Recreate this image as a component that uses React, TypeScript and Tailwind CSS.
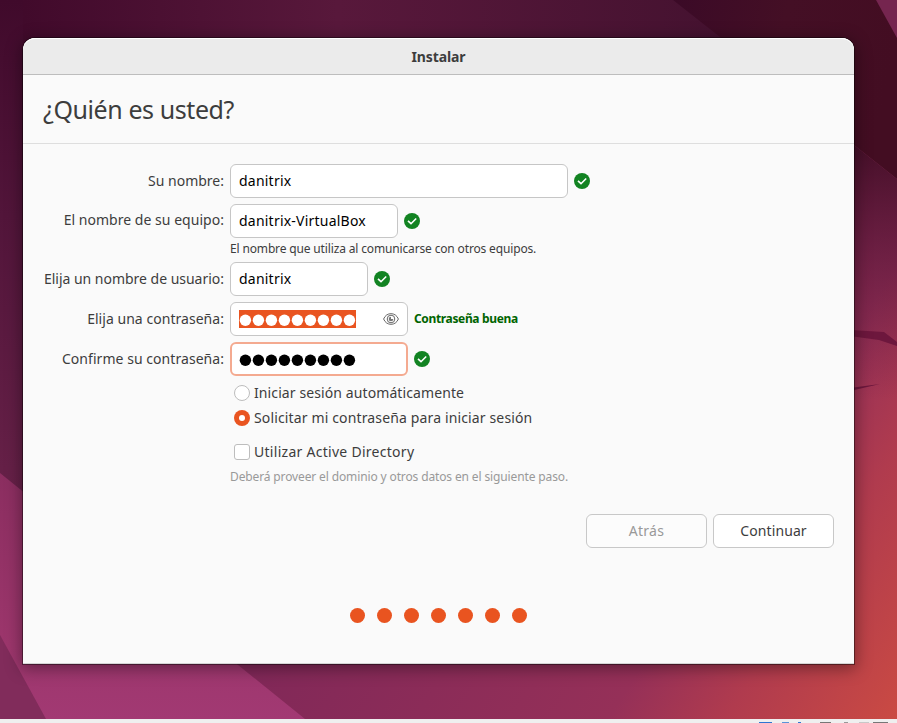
import type { ReactNode } from 'react';

function Wallpaper() {
  return (
    <svg className="absolute inset-0 h-[719px] w-[897px]" viewBox="0 0 897 719" aria-hidden="true">
      <defs>
        <linearGradient id="left" x1="0" y1="0" x2="0" y2="1">
          <stop offset="0" stopColor="#400a2b" />
          <stop offset="0.3" stopColor="#52153a" />
          <stop offset="0.65" stopColor="#652047" />
          <stop offset="1" stopColor="#702350" />
        </linearGradient>
        <linearGradient id="top" x1="0" y1="0" x2="1" y2="0">
          <stop offset="0" stopColor="#410a2b" />
          <stop offset="0.36" stopColor="#58183b" />
          <stop offset="0.8" stopColor="#451230" />
          <stop offset="1" stopColor="#43122f" />
        </linearGradient>
        <linearGradient id="shade" x1="0" y1="0" x2="1" y2="0.2">
          <stop offset="0" stopColor="#3b0a27" />
          <stop offset="0.5" stopColor="#440f25" />
          <stop offset="1" stopColor="#430d22" />
        </linearGradient>
        <linearGradient id="warm" x1="0" y1="0" x2="972" y2="615" gradientUnits="userSpaceOnUse">
          <stop offset="0.497" stopColor="#812858" />
          <stop offset="0.781" stopColor="#953058" />
          <stop offset="0.867" stopColor="#b03b4e" />
          <stop offset="0.993" stopColor="#ca4a43" />
        </linearGradient>
        <linearGradient id="dusk" x1="0" y1="145" x2="0" y2="400" gradientUnits="userSpaceOnUse">
          <stop offset="0" stopColor="#380a20" stopOpacity="0.85" />
          <stop offset="0.45" stopColor="#4a1030" stopOpacity="0.5" />
          <stop offset="1" stopColor="#5a1538" stopOpacity="0" />
        </linearGradient>
        <linearGradient id="magenta" x1="0" y1="473" x2="0" y2="719" gradientUnits="userSpaceOnUse">
          <stop offset="0" stopColor="#8b2e60" />
          <stop offset="0.7" stopColor="#9c366c" />
          <stop offset="1" stopColor="#a23973" />
        </linearGradient>
      </defs>
      <path fill="url(#left)" d="M0 0h450v719H0z" />
      <path fill="url(#top)" d="M23 0h874v80H23z" />
      <path fill="url(#shade)" d="M673 0h224v200H854L720 37z" />
      <path fill="#75254f" d="M876 0h21v38z" />
      <path fill="url(#warm)" d="M840 134l57 45v540H200v-89h640z" />
      <path fill="url(#dusk)" d="M840 134l57 45v221h-57z" />
      <path fill="#6d173d" d="M850 330l34 2 13 10v4l-18-6-29-4zM850 388l30-4-30 7z" />
      <path fill="url(#magenta)" d="M0 473l305 246H0z" />
      <path fill="#812c5b" d="M0 635l46 84H0z" />
    </svg>
  );
}

function Check() {
  return (
    <svg className="ml-1.5 size-4 shrink-0" viewBox="0 0 16 16" aria-hidden="true">
      <circle cx="8" cy="8" r="8" fill="#128322" />
      <path d="M4 7.8l3 2.9 5.2-5.2" fill="none" stroke="#fff" strokeWidth="1.6" />
    </svg>
  );
}

function Eye() {
  return (
    <svg className="h-4 w-4" viewBox="0 0 16 16" fill="none" stroke="#666" strokeWidth="1" aria-hidden="true">
      <path d="M.6 8C2.2 4.3 4.8 2.7 8 2.7S13.8 4.3 15.4 8C13.8 11.7 11.2 13.3 8 13.3S2.2 11.7.6 8z" />
      <circle cx="8" cy="8" r="3.8" />
      <path d="M8 5.7A2.3 2.3 0 1 0 10.3 8H8z" fill="#777" stroke="none" />
    </svg>
  );
}

function Row({ label, tracking, children }: { label: string; tracking: string; children: ReactNode }) {
  return (
    <div className="flex h-[34px] items-center">
      <label className={`w-[201px] shrink-0 whitespace-nowrap text-right ${tracking}`}>{label}</label>
      <div className="ml-[6px] flex items-center">{children}</div>
    </div>
  );
}

function Field({ width, children }: { width: string; children: ReactNode }) {
  return (
    <div className={`flex h-[34px] items-center rounded-md border border-[#c6c6c6] bg-white px-2 tracking-[0.22px] text-black ${width}`}>
      {children}
    </div>
  );
}

function Bullets({ color }: { color: string }) {
  return (
    <svg className={`block h-[18px] w-[117px] ${color}`} viewBox="0 0 117 18" fill="currentColor" aria-hidden="true">
      {Array.from({ length: 9 }, (_, i) => (
        <circle key={i} cx={6.4 + i * 13} cy="10.2" r="5.7" />
      ))}
    </svg>
  );
}

export default function App() {
  return (
    <div className="relative flex h-[723px] w-[897px] flex-col overflow-hidden font-['Noto_Sans',sans-serif] text-[14px] leading-5 text-[#3d3d3d]">
      <Wallpaper />
      <main className="relative ml-[23px] mt-[38px] flex h-[626px] w-[831px] flex-col rounded-t-xl border-b border-[#d5d5d5] bg-[#fafafa] shadow-[0_0_0_1px_rgba(0,0,0,0.4),0_3px_16px_2px_rgba(0,0,0,0.36)]">
        <header className="flex h-[37px] items-center justify-center rounded-t-xl border-b border-[#bdbdbd] bg-[#ebebeb] pt-0.5 text-[14px] font-bold tracking-[-0.1px] shadow-[inset_0_1px_#fff]">
          Instalar
        </header>
        <h1 className="flex h-[69px] items-center border-b border-[#dedede] pl-5 text-[25px] tracking-[-0.42px]">¿Quién es usted?</h1>
        <form className="flex flex-col pt-5">
          <Row label="Su nombre:" tracking="tracking-[0px]">
            <Field width="w-[338px]">danitrix</Field>
            <Check />
          </Row>
          <div className="mt-1.5">
            <Row label="El nombre de su equipo:" tracking="tracking-[0.03px] pb-0.5">
              <Field width="w-[168px]">danitrix-VirtualBox</Field>
              <Check />
            </Row>
          </div>
          <p className="ml-[207px] h-6 whitespace-nowrap pt-px text-[12px] tracking-[-0.15px]">El nombre que utiliza al comunicarse con otros equipos.</p>
          <Row label="Elija un nombre de usuario:" tracking="tracking-[-0.02px]">
            <Field width="w-[138px]">danitrix</Field>
            <Check />
          </Row>
          <div className="mt-1.5">
            <Row label="Elija una contraseña:" tracking="tracking-[0.04px]">
              <Field width="w-[178px]">
                <span className="bg-[#e95420]"><Bullets color="text-white" /></span>
                <span className="ml-auto"><Eye /></span>
              </Field>
              <strong className="ml-1.5 text-[12px] tracking-[-0.35px] text-[#006400]">Contraseña buena</strong>
            </Row>
          </div>
          <div className="mt-1.5">
            <Row label="Confirme su contraseña:" tracking="tracking-[0.05px]">
              <div className="flex h-[34px] w-[178px] items-center rounded-md border-2 border-[#f4aa90] bg-white px-[7px]">
                <Bullets color="text-black" />
              </div>
              <Check />
            </Row>
          </div>
          <div className="ml-[211px] mt-[7px] flex flex-col">
            <label className="flex h-5 items-center gap-1">
              <span className="size-4 rounded-full border border-[#bdbdbd] bg-white" />
              <span className="tracking-[0.1px]">Iniciar sesión automáticamente</span>
            </label>
            <label className="mt-[5px] flex h-5 items-center gap-1">
              <span className="flex size-4 items-center justify-center rounded-full bg-[#e95420]">
                <span className="size-1.5 rounded-full bg-white" />
              </span>
              <span className="tracking-[0.14px]">Solicitar mi contraseña para iniciar sesión</span>
            </label>
            <label className="mt-3.5 flex h-5 items-center gap-1">
              <span className="size-4 rounded-[3px] border border-[#bdbdbd] bg-white" />
              <span className="tracking-[0.28px]">Utilizar Active Directory</span>
            </label>
          </div>
          <p className="ml-[207px] mt-[5px] h-5 whitespace-nowrap text-[12px] tracking-[-0.13px] text-[#999]">Deberá proveer el dominio y otros datos en el siguiente paso.</p>
          <div className="mr-5 mt-[27px] flex justify-end gap-1.5">
            <button type="button" disabled className="h-[34px] w-[121px] rounded-md border border-[#c8c8c8] bg-[#fcfcfc] tracking-[0.3px] text-[#999]">Atrás</button>
            <button type="button" className="h-[34px] w-[121px] rounded-md border border-[#c8c8c8] bg-white tracking-[0.1px]">Continuar</button>
          </div>
        </form>
        <div className="mt-[60px] flex justify-center gap-3">
          {Array.from({ length: 7 }, (_, i) => (
            <span key={i} className="size-[15px] rounded-full bg-[#e95420]" />
          ))}
        </div>
      </main>
      <footer className="relative mt-auto flex h-1 items-end bg-[#efefef] pl-[759px]">
        <i className="h-px w-[13px] bg-[#2e75d2]" />
        <i className="ml-[10px] h-px w-[7px] bg-[#5a93d8]" />
        <i className="ml-[9px] h-px w-[3px] bg-[#2e75d2]" />
        <i className="ml-[19px] h-px w-[11px] bg-[#777]" />
        <i className="ml-[13px] h-px w-[4px] bg-[#999]" />
        <i className="ml-[11px] h-px w-[10px] bg-[#c8c8c8]" />
        <i className="ml-[4px] h-px w-[15px] bg-[#777]" />
      </footer>
    </div>
  );
}
